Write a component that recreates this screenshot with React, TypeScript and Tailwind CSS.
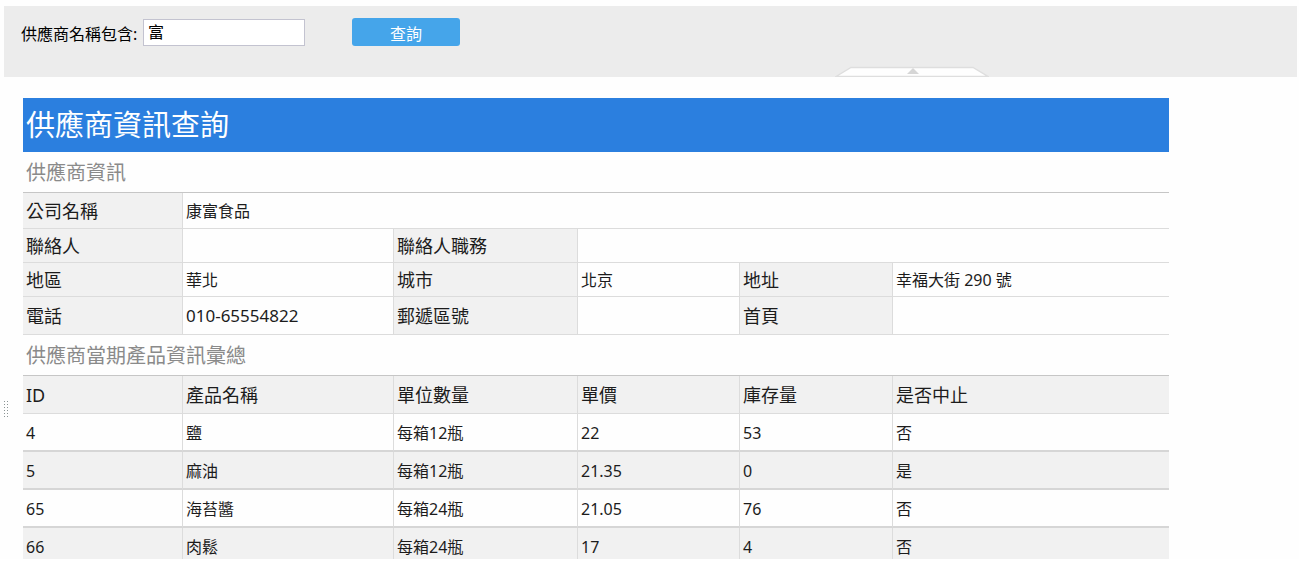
import { useState } from 'react'

interface Product {
  id: string
  name: string
  unit: string
  price: string
  stock: string
  stopped: string
}

const products: Product[] = [
  { id: '4', name: '鹽', unit: '每箱12瓶', price: '22', stock: '53', stopped: '否' },
  { id: '5', name: '麻油', unit: '每箱12瓶', price: '21.35', stock: '0', stopped: '是' },
  { id: '65', name: '海苔醬', unit: '每箱24瓶', price: '21.05', stock: '76', stopped: '否' },
  { id: '66', name: '肉鬆', unit: '每箱24瓶', price: '17', stock: '4', stopped: '否' },
]

const columns = ['ID', '產品名稱', '單位數量', '單價', '庫存量', '是否中止']

const labelCell = 'bg-[#f1f1f1] border-r border-b border-[#dcdcdc] pl-[3px] text-left text-lg leading-6 font-normal'
const valueCell = 'border-r border-b border-[#dcdcdc] pl-[3px] text-base leading-6 last:border-r-0'
const dataCell = 'h-[38px] border-r border-b-2 border-r-[#dcdcdc] border-b-[#d6d6d6] pt-[7px] pl-[3px] align-top text-base leading-6 last:border-r-0 group-last:h-[31px] group-last:border-b-0'

// Les deux tableaux partagent les mêmes colonnes, la dernière prend le reste
function Columns() {
  return (
    <colgroup>
      <col className="w-[160px]" />
      <col className="w-[211px]" />
      <col className="w-[184px]" />
      <col className="w-[162px]" />
      <col className="w-[153px]" />
      <col />
    </colgroup>
  )
}

export default function App() {
  const [keyword, setKeyword] = useState('富')

  return (
    <div className="bg-[#fefefe] pt-1.5 text-[#1c1c1c] font-['Noto_Sans','Noto_Sans_CJK_TC',sans-serif]">
      <form
        onSubmit={e => e.preventDefault()}
        className="relative ml-1 mr-0.5 flex h-[71px] items-start bg-[#ececec] pt-3 pl-[17px]">
        <label htmlFor="supplier" className="w-[122px] whitespace-nowrap pt-1 text-base leading-6 text-black">供應商名稱包含:</label>
        <input
          id="supplier"
          type="text"
          value={keyword}
          onChange={e => setKeyword(e.target.value)}
          className="mt-px h-[27px] w-[162px] border border-[#c3c3d0] bg-white px-1 pb-1 text-base leading-5 text-black outline-none"
        />
        <button type="submit" className="ml-[47px] h-7 w-[108px] cursor-pointer rounded-[3px] bg-[#45a5ea] pt-1 text-base leading-6 text-white">查詢</button>

        {/* Languette pour replier le panneau */}
        <button type="button" aria-label="收起" className="absolute bottom-0 left-[831px] cursor-pointer">
          <svg width="154" height="11" viewBox="0 0 154 11" className="block">
            <path d="M1 10.5 L16 1.5 H138 L153 10.5 Z" fill="#fefefe" stroke="#dedede" strokeWidth="1.3" />
            <path d="M72 8 L78 2 L84 8 Z" fill="#d6d6d6" />
          </svg>
        </button>
      </form>

      {/* Poignée du volet latéral */}
      <svg width="6" height="18" viewBox="0 0 6 18" className="absolute top-[400px] left-1">
        <path d="M0.5 1V18M3.5 1V18" stroke="#8a9494" strokeWidth="1" strokeDasharray="1 2" />
      </svg>

      <main className="mt-[21px] ml-[23px] mr-[130px]">
        <h1 className="h-[54px] bg-[#2b7fdf] pl-[3px] text-[29px] leading-[54px] text-white">供應商資訊查詢</h1>

        <h2 className="h-10 pl-[3px] text-xl leading-[42px] text-[#8a8a8a]">供應商資訊</h2>
        <table className="w-full table-fixed border-separate border-spacing-0 border-t border-[#c6c6c6]">
          <Columns />
          <tbody>
            <tr className="h-9">
              <th scope="row" className={labelCell}>公司名稱</th>
              <td colSpan={5} className={valueCell}>康富食品</td>
            </tr>
            <tr className="h-[34px]">
              <th scope="row" className={labelCell}>聯絡人</th>
              <td className={valueCell} />
              <th scope="row" className={labelCell}>聯絡人職務</th>
              <td colSpan={3} className={valueCell} />
            </tr>
            <tr className="h-[34px]">
              <th scope="row" className={labelCell}>地區</th>
              <td className={valueCell}>華北</td>
              <th scope="row" className={labelCell}>城市</th>
              <td className={valueCell}>北京</td>
              <th scope="row" className={labelCell}>地址</th>
              <td className={valueCell}>幸福大街 290 號</td>
            </tr>
            <tr className="h-[38px]">
              <th scope="row" className={labelCell}>電話</th>
              <td className={valueCell}><span className="text-[17px]">010-65554822</span></td>
              <th scope="row" className={labelCell}>郵遞區號</th>
              <td className={valueCell} />
              <th scope="row" className={labelCell}>首頁</th>
              <td className={valueCell} />
            </tr>
          </tbody>
        </table>

        <h2 className="h-10 pl-[3px] text-xl leading-[42px] text-[#8a8a8a]">供應商當期產品資訊彙總</h2>
        <table className="w-full table-fixed border-separate border-spacing-0 border-t border-[#c6c6c6]">
          <Columns />
          <thead>
            <tr className="h-[38px]">
              {columns.map(column => (
                <th key={column} scope="col" className={`${labelCell} last:border-r-0`}>{column}</th>
              ))}
            </tr>
          </thead>
          <tbody>
            {products.map(p => (
              <tr key={p.id} className="group even:bg-[#f1f1f1]">
                <td className={dataCell}>{p.id}</td>
                <td className={dataCell}>{p.name}</td>
                <td className={dataCell}>{p.unit}</td>
                <td className={dataCell}>{p.price}</td>
                <td className={dataCell}>{p.stock}</td>
                <td className={dataCell}>{p.stopped}</td>
              </tr>
            ))}
          </tbody>
        </table>
      </main>
    </div>
  )
}
